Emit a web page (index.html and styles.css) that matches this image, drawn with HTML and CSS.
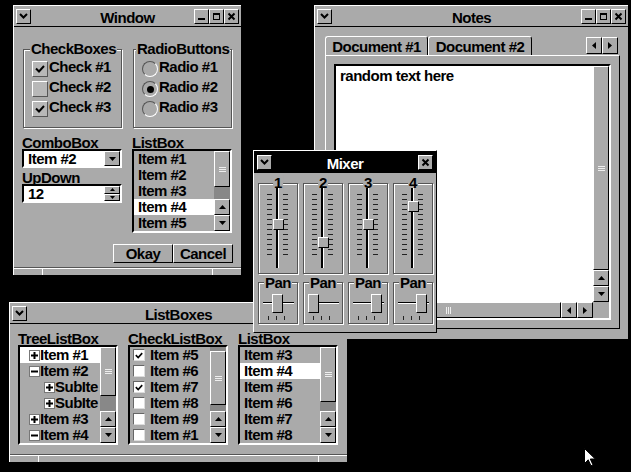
FILE: index.html
```html
<!DOCTYPE html>
<html lang="en">

<head>
  <meta charset="UTF-8" />
  <meta name="viewport" content="width=device-width, initial-scale=1.0" />
  <title>Desktop</title>
  <link rel="stylesheet" href="styles.css">
</head>

<body>
  <svg class="defs" width="0" height="0" aria-hidden="true">
    <symbol id="i-chev" viewBox="0 0 9 6"><polyline points="1,1 4.5,4.5 8,1" fill="none" stroke="#000" stroke-width="2" /></symbol>
    <symbol id="i-min" viewBox="0 0 9 9"><rect x="1" y="6" width="7" height="2" /></symbol>
    <symbol id="i-max" viewBox="0 0 9 9"><rect x="1.5" y="1.5" width="6" height="6" fill="none" stroke="#000" /><rect x="1" y="1" width="7" height="2" /></symbol>
    <symbol id="i-close" viewBox="0 0 9 9"><path d="M1.5 1.5L7.5 7.5M7.5 1.5L1.5 7.5" stroke="#000" stroke-width="2" /></symbol>
    <symbol id="i-up" viewBox="0 0 7 4"><polygon points="3.5,0 7,4 0,4" /></symbol>
    <symbol id="i-down" viewBox="0 0 7 4"><polygon points="0,0 7,0 3.5,4" /></symbol>
    <symbol id="i-left" viewBox="0 0 4 7"><polygon points="4,0 4,7 0,3.5" /></symbol>
    <symbol id="i-right" viewBox="0 0 4 7"><polygon points="0,0 4,3.5 0,7" /></symbol>
    <symbol id="i-check" viewBox="0 0 10 8"><polyline points="1,3.5 4,6.5 9,1" fill="none" stroke="#000" stroke-width="2" /></symbol>
    <symbol id="i-grip" viewBox="0 0 7 5"><path d="M0 .5H7M0 2.5H7M0 4.5H7" stroke="#eee" /></symbol>
    <symbol id="i-griph" viewBox="0 0 5 7"><path d="M.5 0V7M2.5 0V7M4.5 0V7" stroke="#eee" /></symbol>
    <symbol id="i-plus" viewBox="0 0 11 11"><rect x=".5" y=".5" width="10" height="10" fill="#fff" stroke="#777" /><path d="M2 5.5H9M5.5 2V9" stroke="#000" stroke-width="2" /></symbol>
    <symbol id="i-minus" viewBox="0 0 11 11"><rect x=".5" y=".5" width="10" height="10" fill="#fff" stroke="#777" /><path d="M2 5.5H9" stroke="#000" stroke-width="2" /></symbol>
  </svg>

  <!-- Window -->
  <div class="win w-main">
    <div class="titlebar">
      <div class="tb-left"><span class="tbtn raised"><svg class="ic-chev"><use href="#i-chev" /></svg></span></div>
      <div class="title">Window</div>
      <div class="tb-right">
        <span class="tbtn raised"><svg class="ic-9"><use href="#i-min" /></svg></span>
        <span class="tbtn raised"><svg class="ic-9"><use href="#i-max" /></svg></span>
        <span class="tbtn raised"><svg class="ic-9"><use href="#i-close" /></svg></span>
      </div>
    </div>
    <div class="main-body">
      <div class="groups">
        <div class="group etched">
          <span class="group-label">CheckBoxes</span>
          <div class="opt"><span class="cbox"><svg class="ic-check"><use href="#i-check" /></svg></span><span class="opt-text">Check #1</span></div>
          <div class="opt"><span class="cbox"></span><span class="opt-text">Check #2</span></div>
          <div class="opt"><span class="cbox"><svg class="ic-check"><use href="#i-check" /></svg></span><span class="opt-text">Check #3</span></div>
        </div>
        <div class="group etched">
          <span class="group-label gl-radio">RadioButtons</span>
          <div class="opt"><span class="radio"></span><span class="opt-text">Radio #1</span></div>
          <div class="opt"><span class="radio on"></span><span class="opt-text">Radio #2</span></div>
          <div class="opt"><span class="radio"></span><span class="opt-text">Radio #3</span></div>
        </div>
      </div>

      <div class="fields">
        <div class="col">
          <div class="label">ComboBox</div>
          <div class="field sunken">
            <span class="field-text">Item #2</span>
            <span class="drop raised"><svg class="ic-arrow"><use href="#i-down" /></svg></span>
          </div>
          <div class="label label-gap">UpDown</div>
          <div class="field sunken">
            <span class="field-text">12</span>
            <span class="spin">
              <span class="spin-btn raised"><svg class="ic-tiny"><use href="#i-up" /></svg></span>
              <span class="spin-btn raised"><svg class="ic-tiny"><use href="#i-down" /></svg></span>
            </span>
          </div>
        </div>
        <div class="col">
          <div class="label">ListBox</div>
          <div class="list list-5 sunken">
            <div class="list-items">
              <div class="item">Item #1</div>
              <div class="item">Item #2</div>
              <div class="item">Item #3</div>
              <div class="item sel">Item #4</div>
              <div class="item">Item #5</div>
            </div>
            <div class="vscroll">
              <div class="thumb raised" style="height:36px"><svg class="ic-grip"><use href="#i-grip" /></svg></div>
              <div class="track"></div>
              <div class="sbtn raised"><svg class="ic-arrow"><use href="#i-up" /></svg></div>
              <div class="sbtn raised"><svg class="ic-arrow"><use href="#i-down" /></svg></div>
            </div>
          </div>
        </div>
      </div>

      <div class="buttons">
        <span class="btn raised">Okay</span>
        <span class="btn raised">Cancel</span>
      </div>
    </div>
    <div class="status"><span></span><span></span><span></span></div>
  </div>

  <!-- Notes -->
  <div class="win w-notes">
    <div class="titlebar">
      <div class="tb-left"><span class="tbtn raised"><svg class="ic-chev"><use href="#i-chev" /></svg></span></div>
      <div class="title">Notes</div>
      <div class="tb-right">
        <span class="tbtn raised"><svg class="ic-9"><use href="#i-min" /></svg></span>
        <span class="tbtn raised"><svg class="ic-9"><use href="#i-max" /></svg></span>
        <span class="tbtn raised"><svg class="ic-9"><use href="#i-close" /></svg></span>
      </div>
    </div>
    <div class="notes-body">
      <div class="tabs">
        <span class="tab tab-1">Document #1</span>
        <span class="tab tab-2 active">Document #2</span>
        <span class="tab-scroll">
          <span class="tsbtn raised"><svg class="ic-side"><use href="#i-left" /></svg></span>
          <span class="tsbtn raised"><svg class="ic-side"><use href="#i-right" /></svg></span>
        </span>
      </div>
      <div class="panel">
        <div class="editor sunken">
          <div class="editor-text">random text here</div>
          <div class="vscroll">
            <div class="thumb raised" style="height:204px"><svg class="ic-grip"><use href="#i-grip" /></svg></div>
            <div class="track"></div>
            <div class="sbtn raised"><svg class="ic-arrow"><use href="#i-up" /></svg></div>
            <div class="sbtn raised"><svg class="ic-arrow"><use href="#i-down" /></svg></div>
          </div>
          <div class="hscroll">
            <div class="hthumb raised"><svg class="ic-griph"><use href="#i-griph" /></svg></div>
            <div class="hbtn raised"><svg class="ic-side"><use href="#i-left" /></svg></div>
            <div class="hbtn raised"><svg class="ic-side"><use href="#i-right" /></svg></div>
          </div>
          <div class="corner"></div>
        </div>
      </div>
    </div>
  </div>

  <!-- ListBoxes -->
  <div class="win w-lists">
    <div class="titlebar">
      <div class="tb-left"><span class="tbtn raised"><svg class="ic-chev"><use href="#i-chev" /></svg></span></div>
      <div class="title">ListBoxes</div>
      <div class="tb-right">
        <span class="tbtn raised"><svg class="ic-9"><use href="#i-min" /></svg></span>
        <span class="tbtn raised"><svg class="ic-9"><use href="#i-max" /></svg></span>
        <span class="tbtn raised"><svg class="ic-9"><use href="#i-close" /></svg></span>
      </div>
    </div>
    <div class="lists-body">
      <div class="col">
        <div class="label">TreeListBox</div>
        <div class="list list-6 sunken">
          <div class="list-items">
            <div class="tree-item sel"><svg class="ic-node"><use href="#i-plus" /></svg>Item #1</div>
            <div class="tree-item"><svg class="ic-node"><use href="#i-minus" /></svg>Item #2</div>
            <div class="tree-item sub"><svg class="ic-node"><use href="#i-plus" /></svg>SubIte</div>
            <div class="tree-item sub"><svg class="ic-node"><use href="#i-plus" /></svg>SubIte</div>
            <div class="tree-item"><svg class="ic-node"><use href="#i-plus" /></svg>Item #3</div>
            <div class="tree-item"><svg class="ic-node"><use href="#i-minus" /></svg>Item #4</div>
          </div>
          <div class="vscroll">
            <div class="thumb raised" style="height:49px"><svg class="ic-grip"><use href="#i-grip" /></svg></div>
            <div class="track"></div>
            <div class="sbtn raised"><svg class="ic-arrow"><use href="#i-up" /></svg></div>
            <div class="sbtn raised"><svg class="ic-arrow"><use href="#i-down" /></svg></div>
          </div>
        </div>
      </div>
      <div class="col">
        <div class="label">CheckListBox</div>
        <div class="list list-6 sunken">
          <div class="list-items">
            <div class="chk-item"><span class="cl-box"><svg class="ic-check"><use href="#i-check" /></svg></span>Item #5</div>
            <div class="chk-item"><span class="cl-box"></span>Item #6</div>
            <div class="chk-item"><span class="cl-box"><svg class="ic-check"><use href="#i-check" /></svg></span>Item #7</div>
            <div class="chk-item"><span class="cl-box"></span>Item #8</div>
            <div class="chk-item"><span class="cl-box"></span>Item #9</div>
            <div class="chk-item"><span class="cl-box"></span>Item #1</div>
          </div>
          <div class="vscroll">
            <div class="track" style="flex:none;height:4px"></div>
            <div class="thumb raised" style="height:54px"><svg class="ic-grip"><use href="#i-grip" /></svg></div>
            <div class="track"></div>
            <div class="sbtn raised"><svg class="ic-arrow"><use href="#i-up" /></svg></div>
            <div class="sbtn raised"><svg class="ic-arrow"><use href="#i-down" /></svg></div>
          </div>
        </div>
      </div>
      <div class="col">
        <div class="label">ListBox</div>
        <div class="list list-6 sunken">
          <div class="list-items">
            <div class="item">Item #3</div>
            <div class="item sel">Item #4</div>
            <div class="item">Item #5</div>
            <div class="item">Item #6</div>
            <div class="item">Item #7</div>
            <div class="item">Item #8</div>
          </div>
          <div class="vscroll">
            <div class="thumb raised" style="height:55px"><svg class="ic-grip"><use href="#i-grip" /></svg></div>
            <div class="track"></div>
            <div class="sbtn raised"><svg class="ic-arrow"><use href="#i-up" /></svg></div>
            <div class="sbtn raised"><svg class="ic-arrow"><use href="#i-down" /></svg></div>
          </div>
        </div>
      </div>
    </div>
    <div class="status"><span></span><span></span><span></span></div>
  </div>

  <!-- Mixer -->
  <div class="win w-mixer">
    <div class="titlebar active">
      <div class="tb-left"><span class="tbtn raised"><svg class="ic-chev"><use href="#i-chev" /></svg></span></div>
      <div class="title">Mixer</div>
      <div class="tb-right"><span class="tbtn raised"><svg class="ic-9"><use href="#i-close" /></svg></span></div>
    </div>
    <div class="mixer-body">
      <div class="chan">
        <div class="slider etched">
          <span class="chan-label">1</span>
          <span class="ticks"></span><span class="ticks ticks-r"></span>
          <span class="track-v"></span>
          <span class="knob raised" style="top:35px"></span>
        </div>
        <div class="pan etched">
          <span class="chan-label">Pan</span>
          <span class="track-h"></span><span class="pan-ticks"></span>
          <span class="pan-knob raised" style="left:13px"></span>
        </div>
      </div>
      <div class="chan">
        <div class="slider etched">
          <span class="chan-label">2</span>
          <span class="ticks"></span><span class="ticks ticks-r"></span>
          <span class="track-v"></span>
          <span class="knob raised" style="top:53px"></span>
        </div>
        <div class="pan etched">
          <span class="chan-label">Pan</span>
          <span class="track-h"></span><span class="pan-ticks"></span>
          <span class="pan-knob raised" style="left:4px"></span>
        </div>
      </div>
      <div class="chan">
        <div class="slider etched">
          <span class="chan-label">3</span>
          <span class="ticks"></span><span class="ticks ticks-r"></span>
          <span class="track-v"></span>
          <span class="knob raised" style="top:35px"></span>
        </div>
        <div class="pan etched">
          <span class="chan-label">Pan</span>
          <span class="track-h"></span><span class="pan-ticks"></span>
          <span class="pan-knob raised" style="left:22px"></span>
        </div>
      </div>
      <div class="chan">
        <div class="slider etched">
          <span class="chan-label">4</span>
          <span class="ticks"></span><span class="ticks ticks-r"></span>
          <span class="track-v"></span>
          <span class="knob raised" style="top:17px"></span>
        </div>
        <div class="pan etched">
          <span class="chan-label">Pan</span>
          <span class="track-h"></span><span class="pan-ticks"></span>
          <span class="pan-knob raised" style="left:22px"></span>
        </div>
      </div>
    </div>
  </div>

  <svg class="cursor" width="12" height="19" viewBox="0 0 12 19">
    <path d="M.5 .5V15.5L4.2 11.8L7 17.8L9 16.9L6.3 11H11.3Z" fill="#fff" stroke="#000" />
  </svg>
</body>

</html>
```

FILE: styles.css
```css
* {
  box-sizing: border-box;
}

body {
  margin: 0;
  width: 631px;
  height: 472px;
  position: relative;
  overflow: hidden;
  background: #000;
  color: #000;
  font-family: "Liberation Sans", Arial, sans-serif;
  font-weight: bold;
  font-size: 15px;
  line-height: 16px;
  letter-spacing: -0.5px;
}

svg {
  display: block;
}

.defs {
  position: absolute;
  width: 0;
  height: 0;
}

/* bevels */
.raised {
  background: #aaa;
  border: 1px solid;
  border-color: #fff #000 #000 #fff;
}

.sunken {
  border: 2px solid;
  border-color: #000 #fff #fff #000;
}

.etched {
  border: 1px solid #555;
  box-shadow: inset 1px 1px #fff, 1px 1px #fff;
}

/* windows */
.win {
  position: absolute;
  display: flex;
  flex-direction: column;
  background: #aaa;
  border-top: 1px solid #fff;
  border-left: 1px solid #fff;
  overflow: hidden;
}

.w-main {
  left: 13px;
  top: 5px;
  width: 228px;
  height: 270px;
}

.w-notes {
  left: 314px;
  top: 5px;
  width: 314px;
  height: 334px;
}

.w-lists {
  left: 9px;
  top: 302px;
  width: 338px;
  height: 160px;
}

.w-mixer {
  left: 253px;
  top: 150px;
  width: 184px;
  height: 183px;
  border-right: 1px solid #000;
  border-bottom: 1px solid #000;
}

.titlebar {
  flex: none;
  height: 21px;
  padding: 0 2px;
  border-bottom: 1px solid #000;
  display: grid;
  grid-template-columns: 1fr auto 1fr;
  align-items: center;
}

.titlebar.active {
  height: 22px;
  padding: 0 3px;
  border-bottom: 0;
  background: #000;
  color: #fff;
}

.tb-left {
  display: flex;
}

.tb-right {
  display: flex;
  justify-self: end;
}

.title {
  padding-top: 3px;
  white-space: nowrap;
}

.tbtn {
  width: 15px;
  height: 15px;
  display: flex;
  align-items: center;
  justify-content: center;
}

.ic-chev {
  width: 9px;
  height: 6px;
}

.ic-9 {
  width: 9px;
  height: 9px;
}

.ic-arrow {
  width: 7px;
  height: 4px;
}

.ic-tiny {
  width: 5px;
  height: 3px;
}

.ic-side {
  width: 4px;
  height: 7px;
}

.ic-check {
  width: 10px;
  height: 8px;
}

.ic-grip {
  width: 7px;
  height: 5px;
}

.ic-griph {
  width: 5px;
  height: 7px;
}

.ic-node {
  width: 11px;
  height: 11px;
  margin-top: 3px;
  flex: none;
}

/* Window */
.main-body {
  flex: 1;
  padding: 22px 8px 0 9px;
}

.groups {
  display: flex;
  gap: 11px;
}

.group {
  position: relative;
  width: 99px;
  height: 79px;
  padding: 11px 0 0 8px;
}

.group-label {
  position: absolute;
  top: -9px;
  left: 6px;
  padding: 0 1px;
  background: #aaa;
  white-space: nowrap;
}

.gl-radio {
  left: 2px;
}

.opt {
  display: flex;
  height: 16px;
  margin-bottom: 4px;
}

.opt-text {
  margin: -2px 0 0 1px;
  white-space: nowrap;
}

.cbox {
  flex: none;
  width: 16px;
  height: 16px;
  border: 1px solid;
  border-color: #fff #555 #555 #fff;
  background: #b8b8b8;
  display: flex;
  align-items: center;
  justify-content: center;
}

.radio {
  flex: none;
  width: 16px;
  height: 16px;
  border-radius: 50%;
  border: 1px solid;
  border-color: #555 #fff #fff #555;
  display: flex;
  align-items: center;
  justify-content: center;
}

.radio.on::after {
  content: "";
  width: 7px;
  height: 7px;
  border-radius: 50%;
  background: #000;
}

.fields {
  display: flex;
  gap: 10px;
  margin: 8px 0 0 -1px;
}

.col {
  width: 100px;
  display: flex;
  flex-direction: column;
}

.label {
  height: 13px;
  line-height: 13px;
  white-space: nowrap;
}

.label-gap {
  margin-top: 3px;
}

.field {
  height: 19px;
  background: #fff;
  line-height: 15px;
  display: flex;
}

.field-text {
  flex: 1;
  padding-left: 4px;
}

.drop {
  width: 16px;
  height: 15px;
  display: flex;
  align-items: center;
  justify-content: center;
}

.spin {
  width: 16px;
  display: flex;
  flex-direction: column;
}

.spin-btn {
  flex: 1;
  display: flex;
  align-items: center;
  justify-content: center;
}

.buttons {
  display: flex;
  justify-content: flex-end;
  margin-top: 11px;
}

.btn {
  width: 60px;
  height: 19px;
  line-height: 17px;
  text-align: center;
}

/* lists */
.list {
  display: flex;
  background: #aaa;
}

.list-5 {
  height: 84px;
}

.list-6 {
  height: 100px;
}

.list-items {
  flex: 1;
  min-width: 0;
  overflow: hidden;
}

.item,
.tree-item,
.chk-item {
  height: 16px;
  white-space: nowrap;
  display: flex;
}

.item {
  padding-left: 4px;
}

.tree-item {
  padding-left: 9px;
}

.tree-item.sub {
  padding-left: 24px;
}

.chk-item {
  padding-left: 3px;
}

.sel {
  background: #fff;
}

.cl-box {
  flex: none;
  width: 12px;
  height: 12px;
  margin: 2px 5px 0 0;
  background: #fff;
  border: 1px solid;
  border-color: #666 #ddd #ddd #666;
  display: flex;
  align-items: center;
  justify-content: center;
}

.cl-box .ic-check {
  width: 8px;
  height: 7px;
}

.vscroll {
  flex: none;
  width: 16px;
  display: flex;
  flex-direction: column;
  background: #888;
}

.thumb {
  flex: none;
  display: flex;
  align-items: center;
  justify-content: center;
}

.track {
  flex: 1;
}

.sbtn {
  flex: none;
  height: 16px;
  display: flex;
  align-items: center;
  justify-content: center;
}

.status {
  flex: none;
  height: 8px;
  margin-top: auto;
  border-top: 1px solid #555;
  box-shadow: inset 0 1px #fff;
  display: flex;
}

.status span:first-child {
  width: 28px;
}

.status span:nth-child(2) {
  flex: 1;
  border-left: 1px solid #fff;
}

.status span:last-child {
  width: 29px;
  border-left: 1px solid #fff;
}

/* Notes */
.notes-body {
  flex: 1;
  padding: 9px 8px 0 10px;
  display: flex;
  flex-direction: column;
}

.tabs {
  display: flex;
  height: 19px;
}

.tab {
  height: 19px;
  padding-top: 2px;
  text-align: center;
  white-space: nowrap;
  border: 1px solid;
  border-bottom: 0;
  border-color: #fff #000 transparent #fff;
  border-radius: 3px 3px 0 0;
}

.tab-1 {
  width: 103px;
}

.tab-2 {
  width: 104px;
}

.tab-scroll {
  display: flex;
  margin: 1px 2px 0 auto;
}

.tsbtn {
  width: 16px;
  height: 17px;
  display: flex;
  align-items: center;
  justify-content: center;
}

.panel {
  padding: 8px;
  border: 1px solid;
  border-color: #fff #000 #000 #fff;
}

.editor {
  height: 256px;
  display: grid;
  grid-template-columns: 1fr 16px;
  grid-template-rows: 1fr 16px;
}

.editor-text {
  background: #fff;
  padding: 2px 4px;
}

.editor .vscroll {
  background: #aaa;
}

.hscroll {
  display: flex;
}

.hthumb {
  flex: 1;
  display: flex;
  align-items: center;
  justify-content: center;
}

.hbtn {
  width: 16px;
  display: flex;
  align-items: center;
  justify-content: center;
}

.corner {
  background: #aaa;
}

/* ListBoxes */
.lists-body {
  flex: 1;
  padding: 8px 8px 0;
  display: flex;
  gap: 10px;
}

/* Mixer */
.mixer-body {
  flex: 1;
  padding: 10px 3px 0 4px;
  display: flex;
  gap: 5px;
}

.chan {
  width: 40px;
  display: flex;
  flex-direction: column;
  gap: 8px;
}

.slider,
.pan {
  position: relative;
}

.slider {
  height: 91px;
}

.pan {
  height: 42px;
}

.chan-label {
  position: absolute;
  top: -9px;
  left: 50%;
  transform: translateX(-50%);
  padding: 0 1px;
  background: #aaa;
}

.pan .chan-label {
  top: -8px;
}

.ticks {
  position: absolute;
  left: 8px;
  top: 10px;
  width: 5px;
  height: 61px;
  background: repeating-linear-gradient(#222 0 1px, transparent 1px 5px);
}

.ticks-r {
  left: 24px;
}

.track-v {
  position: absolute;
  left: 17px;
  top: 4px;
  width: 3px;
  height: 80px;
  border-left: 2px solid #000;
  border-right: 1px solid #fff;
}

.knob {
  position: absolute;
  left: 14px;
  width: 11px;
  height: 11px;
}

.track-h {
  position: absolute;
  left: 4px;
  top: 19px;
  width: 31px;
  height: 2px;
  border-top: 1px solid #000;
  border-bottom: 1px solid #fff;
}

.pan-ticks {
  position: absolute;
  left: 9px;
  top: 33px;
  width: 17px;
  height: 4px;
  background: repeating-linear-gradient(to right, #222 0 1px, transparent 1px 8px);
}

.pan-knob {
  position: absolute;
  top: 11px;
  width: 11px;
  height: 19px;
}

.cursor {
  position: absolute;
  left: 584px;
  top: 448px;
}
```
